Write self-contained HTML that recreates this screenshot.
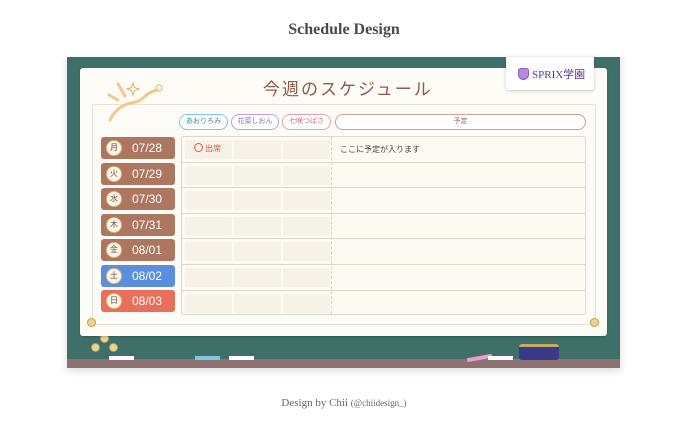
<!DOCTYPE html>
<html><head><meta charset="utf-8"><style>
*{margin:0;padding:0;box-sizing:border-box}
body{width:688px;height:424px;background:#fff;position:relative;overflow:hidden;font-family:"Liberation Sans","Noto Sans CJK JP",sans-serif}
.abs{position:absolute}
.title{left:0;width:688px;top:21px;text-align:center;font-family:"Liberation Serif",serif;font-weight:bold;font-size:16px;color:#4a4a55}
.foot{left:0;width:688px;top:397px;text-align:center;font-family:"Liberation Serif",serif;font-size:11px;color:#666}
.foot small{font-size:9px}
.board{left:67px;top:57px;width:553px;height:311px;background:#3e6f68;box-shadow:0 3px 8px rgba(0,0,0,.15)}
.tray{left:67px;top:359px;width:553px;height:9px;background:#8e7272}
.paper{left:80px;top:68px;width:527px;height:268px;background:#fdfbf6;border-radius:3px;box-shadow:0 1px 2px rgba(0,0,0,.2)}
.inner{left:92px;top:104px;width:504px;height:221px;border:1px solid #e6e2da;border-radius:3px}
.ttl{left:263px;top:75px;font-size:17px;color:#8a5a4a;letter-spacing:2px;font-family:"Noto Sans CJK JP",sans-serif}
.logo{left:506px;top:57px;width:88px;height:33px;background:#fff;border-radius:0 0 3px 3px;box-shadow:0 1px 3px rgba(0,0,0,.2);font-family:"Liberation Serif",serif;font-size:11px;color:#5a3a8a;padding:9px 0 0 12px}
.logo i{display:inline-block;width:11px;height:12px;background:#b88ad8;border-radius:3px 3px 6px 6px;vertical-align:-2px;margin-right:3px;border:1.5px solid #8a5ac0}
.pill{top:114px;height:16px;border-radius:8px;background:#fff;font-size:7px;text-align:center;line-height:14px}
.day{left:101px;width:74px;height:22px;border-radius:3px;background:#ad7660;color:#fff;font-size:12px;line-height:22px;padding-left:31px}
.day b{position:absolute;left:5px;top:3px;width:16px;height:16px;border-radius:50%;background:#fdf6e8;border:1.5px solid #d9b97a;color:#6a4a3a;font-size:8px;line-height:13px;text-align:center;font-weight:normal}
.tbl{left:181px;top:136px;width:405px;height:179px;border:1px solid #ddd8ce;border-radius:3px;background:#fdfaf2}
.row{position:absolute;left:0;width:403px;height:25.6px;border-bottom:1px solid #ddd8ce}
.cell{position:absolute;top:3px;width:47px;height:19px;background:#f6f2e8;border-radius:2px}
.dash{left:331px;top:137px;height:177px;border-left:1px dashed #d8d3c8}
.pin{width:9px;height:9px;border-radius:50%;background:#e8d690;border:1px solid #b8a060}
.chalk{height:4px;top:356px}
</style></head><body>
<div class="abs title">Schedule Design</div>
<div class="abs board"></div>
<div class="abs tray"></div>
<div class="abs chalk" style="left:109px;width:25px;background:#fff"></div>
<div class="abs chalk" style="left:195px;width:25px;background:#7ec8e0"></div>
<div class="abs chalk" style="left:229px;width:25px;background:#fff"></div>
<div class="abs chalk" style="left:467px;width:25px;background:#e8a0d0;transform:rotate(-10deg)"></div>
<div class="abs chalk" style="left:488px;width:25px;background:#fff"></div>
<div class="abs" style="left:519px;top:344px;width:40px;height:16px;background:#3a3a8a;border-radius:3px;border-top:3px solid #c8aa60"></div>
<div class="abs pin" style="left:91px;top:343px"></div>
<div class="abs pin" style="left:109px;top:343px"></div>
<div class="abs pin" style="left:100px;top:334px"></div>
<div class="abs paper"></div>
<div class="abs inner"></div>
<div class="abs pin" style="left:87px;top:318px"></div>
<div class="abs pin" style="left:590px;top:318px"></div>
<svg class="abs" style="left:105px;top:78px" width="60" height="45"><g stroke="#f2c88a" stroke-width="3" fill="none" stroke-linecap="round"><path d="M5 42 Q12 28 26 25 Q34 24 38 20 Q44 14 52 12"/><path d="M13 6 L20 18"/><path d="M4 17 L13 22"/></g><circle cx="54" cy="10" r="3" fill="none" stroke="#f2c88a" stroke-width="1.5"/><path d="M28 5 L29.5 9.5 L34 11 L29.5 12.5 L28 17 L26.5 12.5 L22 11 L26.5 9.5Z" fill="none" stroke="#e0b070" stroke-width="1"/></svg>
<div class="abs ttl">今週のスケジュール</div>
<div class="abs logo"><i></i>SPRIX学園</div>
<div class="abs pill" style="left:179px;width:49px;border:1px solid #7cc8d8;color:#3a8aa0">あおりろみ</div>
<div class="abs pill" style="left:231px;width:48px;border:1px solid #b8a0e0;color:#8a6ac0">花菜しおん</div>
<div class="abs pill" style="left:282px;width:49px;border:1px solid #e8a0b0;color:#d06080">七咲つばさ</div>
<div class="abs pill" style="left:335px;width:251px;border:1px solid #d0a090;color:#8a6a5a">予定</div>
<div class="abs day" style="top:137px"><b>月</b>07/28</div>
<div class="abs day" style="top:163px"><b>火</b>07/29</div>
<div class="abs day" style="top:188px"><b>水</b>07/30</div>
<div class="abs day" style="top:214px"><b>木</b>07/31</div>
<div class="abs day" style="top:239px"><b>金</b>08/01</div>
<div class="abs day" style="top:265px;background:#5a8fe0"><b>土</b>08/02</div>
<div class="abs day" style="top:290px;background:#e8705a"><b>日</b>08/03</div>
<div class="abs tbl">
<div class="row" style="top:0"><div class="cell" style="left:3px"></div><div class="cell" style="left:52px"></div><div class="cell" style="left:101px"></div></div>
<div class="row" style="top:25.6px"><div class="cell" style="left:3px"></div><div class="cell" style="left:52px"></div><div class="cell" style="left:101px"></div></div>
<div class="row" style="top:51.2px"><div class="cell" style="left:3px"></div><div class="cell" style="left:52px"></div><div class="cell" style="left:101px"></div></div>
<div class="row" style="top:76.8px"><div class="cell" style="left:3px"></div><div class="cell" style="left:52px"></div><div class="cell" style="left:101px"></div></div>
<div class="row" style="top:102.4px"><div class="cell" style="left:3px"></div><div class="cell" style="left:52px"></div><div class="cell" style="left:101px"></div></div>
<div class="row" style="top:128px"><div class="cell" style="left:3px"></div><div class="cell" style="left:52px"></div><div class="cell" style="left:101px"></div></div>
<div class="row" style="top:153.6px;border-bottom:none"><div class="cell" style="left:3px"></div><div class="cell" style="left:52px"></div><div class="cell" style="left:101px"></div></div>
</div>
<div class="abs dash"></div>
<div class="abs" style="left:194px;top:143px;font-size:8px;color:#e05a40"><span style="display:inline-block;width:9px;height:9px;border:1px solid #e05a40;border-radius:50%;vertical-align:-1px;margin-right:2px"></span>出席</div>
<div class="abs" style="left:340px;top:144px;font-size:8px;color:#444">ここに予定が入ります</div>
<div class="abs foot">Design by Chii <small>(@chiidesign_)</small></div>
</body></html>
